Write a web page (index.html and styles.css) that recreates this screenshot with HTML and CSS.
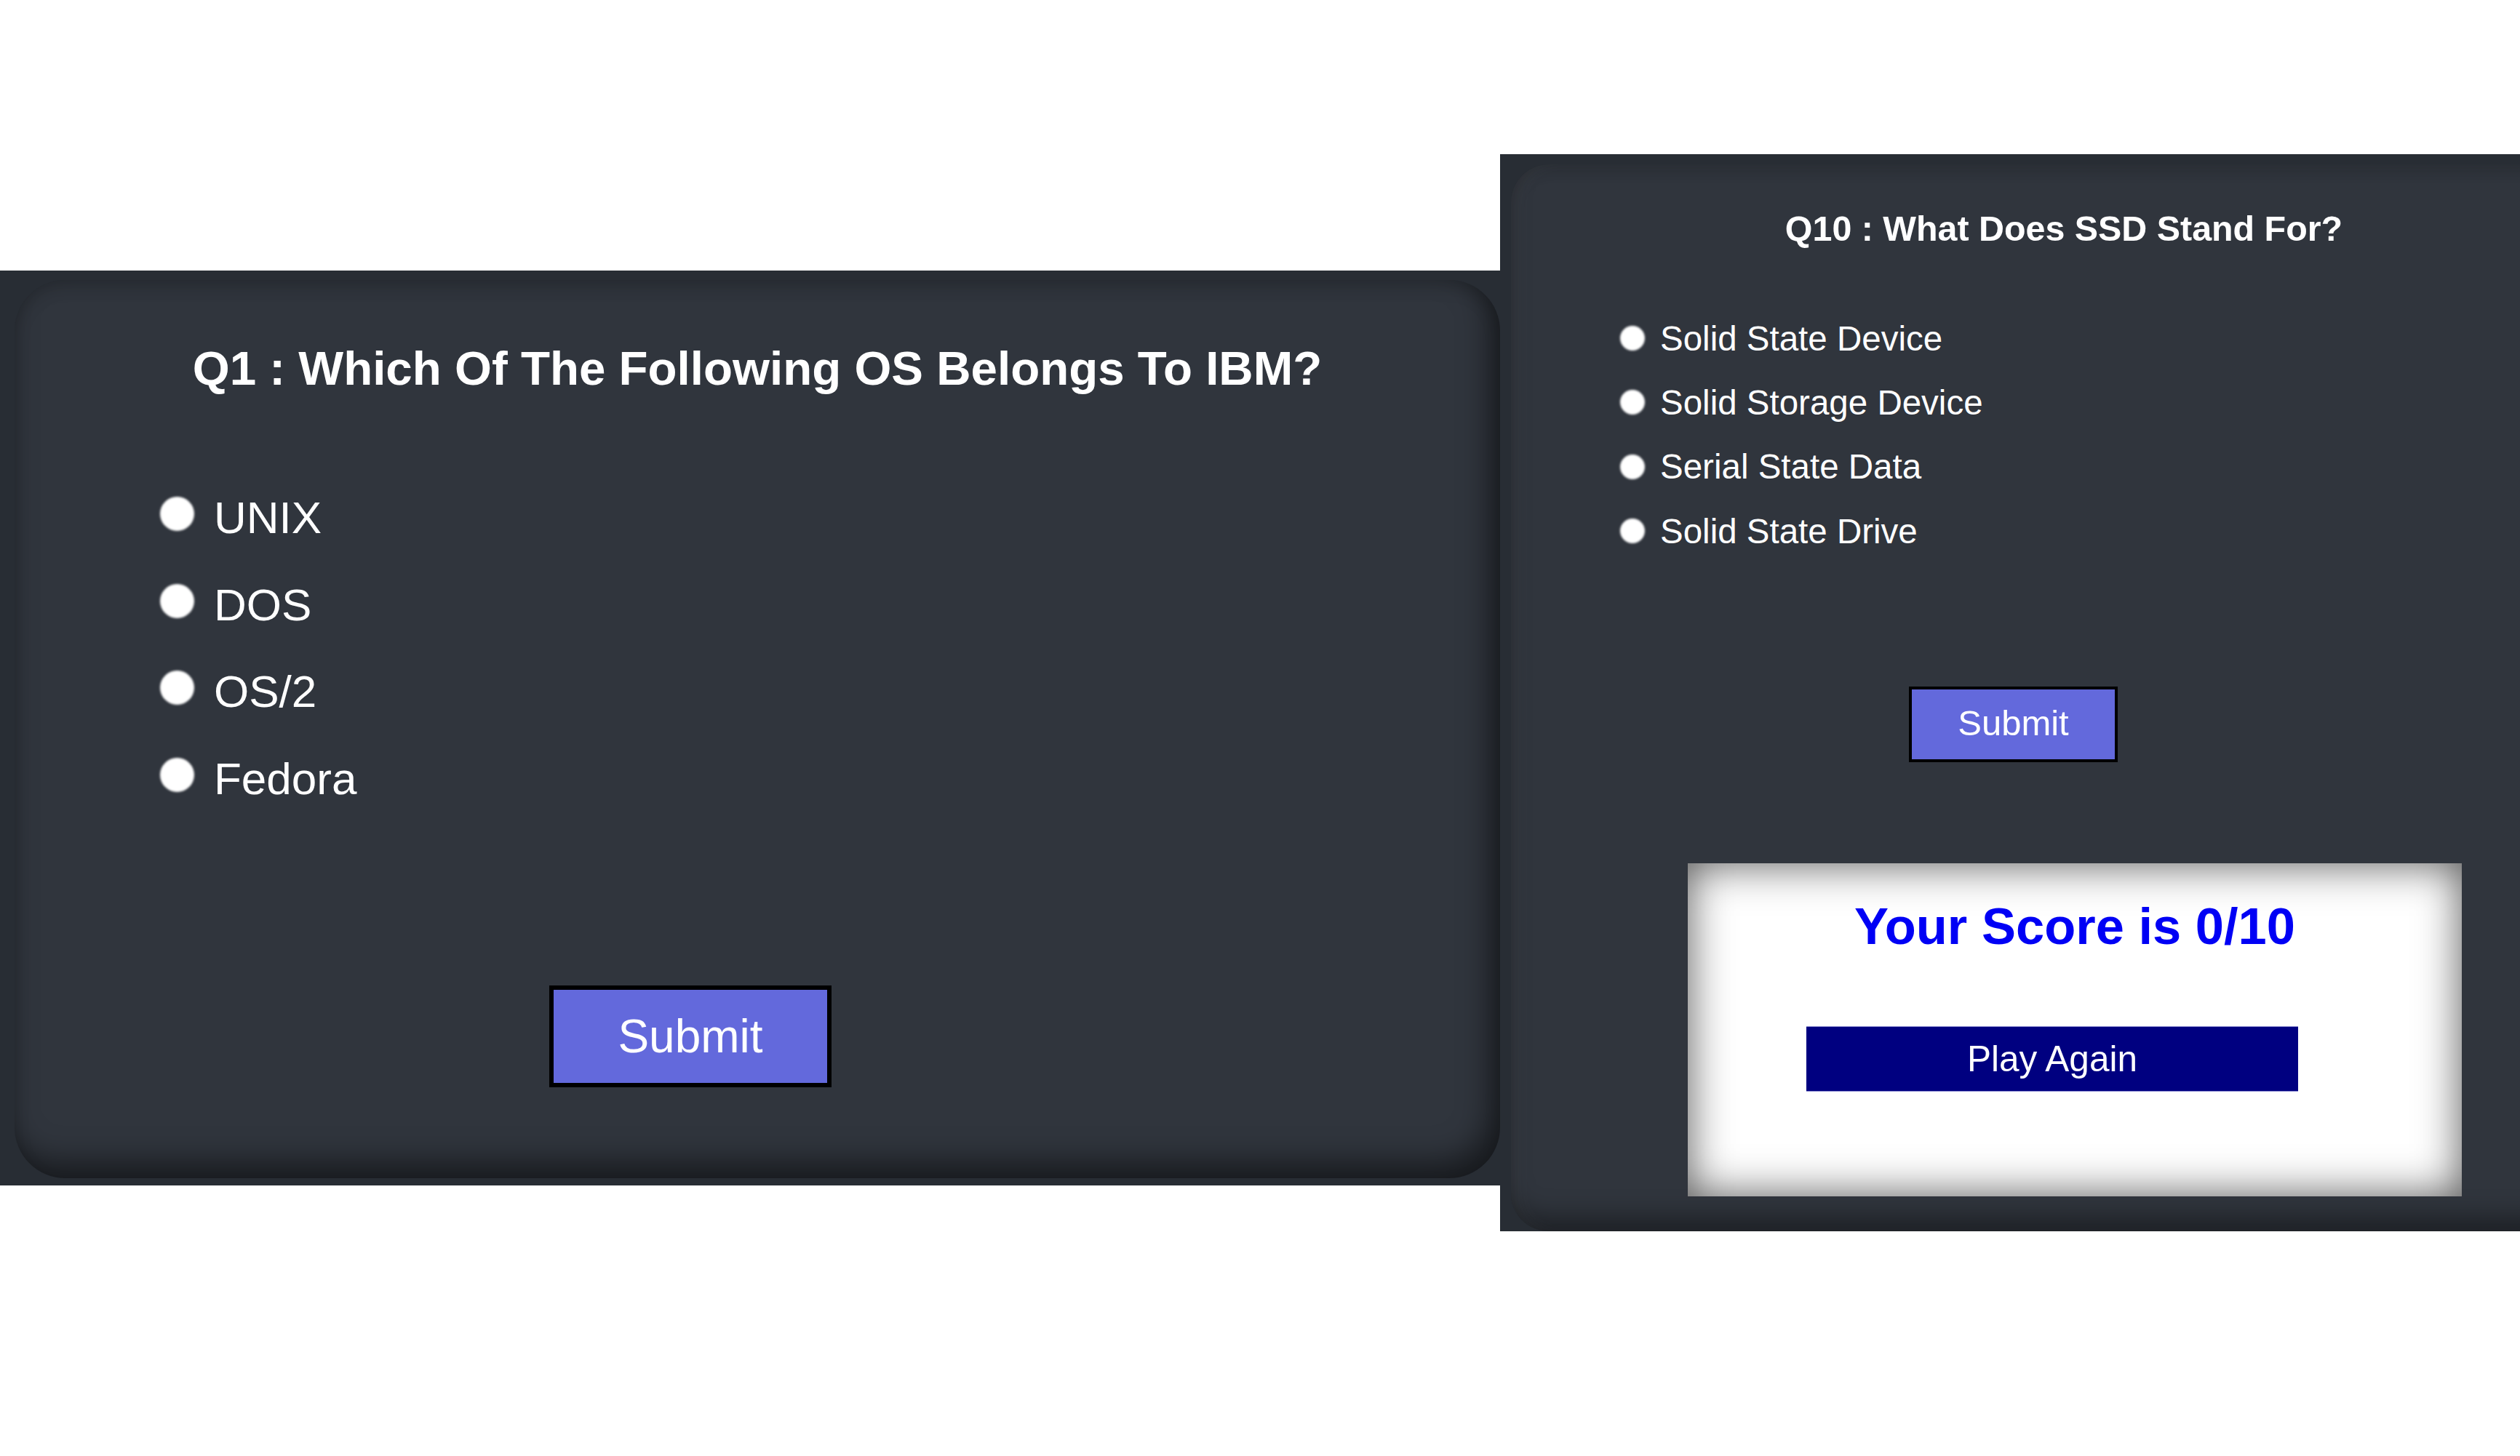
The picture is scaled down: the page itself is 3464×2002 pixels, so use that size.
FILE: index.html
```html
<!DOCTYPE html>
<html lang="en">
<head>
<meta charset="utf-8">
<title>Quiz</title>
<link rel="stylesheet" href="styles.css">
</head>
<body>
<main class="stage">
  <section class="panel panel-lg">
    <div class="card card-lg">
      <h2 class="q-title q-title-lg">Q1 : Which Of The Following OS Belongs To IBM?</h2>
      <ul class="options options-lg">
        <li class="option"><span class="radio"></span><span class="label">UNIX</span></li>
        <li class="option"><span class="radio"></span><span class="label">DOS</span></li>
        <li class="option"><span class="radio"></span><span class="label">OS/2</span></li>
        <li class="option"><span class="radio"></span><span class="label">Fedora</span></li>
      </ul>
      <button class="submit submit-lg">Submit</button>
    </div>
  </section>
  <section class="panel panel-sm">
    <div class="card card-sm">
      <h2 class="q-title q-title-sm">Q10 : What Does SSD Stand For?</h2>
      <ul class="options options-sm">
        <li class="option"><span class="radio"></span><span class="label">Solid State Device</span></li>
        <li class="option"><span class="radio"></span><span class="label">Solid Storage Device</span></li>
        <li class="option"><span class="radio"></span><span class="label">Serial State Data</span></li>
        <li class="option"><span class="radio"></span><span class="label">Solid State Drive</span></li>
      </ul>
      <button class="submit submit-sm">Submit</button>
      <div class="result">
        <p class="score">Your Score is 0/10</p>
        <button class="again">Play Again</button>
      </div>
    </div>
  </section>
</main>
</body>
</html>
```

FILE: styles.css
```css
html, body {
  margin: 0;
  padding: 0;
  background: #ffffff;
}

body {
  width: 3464px;
  height: 2002px;
  overflow: hidden;
  font-family: "Liberation Sans", Arial, sans-serif;
  color: #ffffff;
}

.stage {
  display: flex;
  align-items: flex-start;
}

.panel {
  box-sizing: border-box;
  background: #282d34;
  overflow: hidden;
  flex: none;
}

.panel-lg {
  width: 2062px;
  height: 1258px;
  margin-top: 372px;
  padding: 13px 0 0 20px;
}

.panel-sm {
  width: 1402px;
  height: 1481px;
  margin-top: 212px;
  padding: 14px 0 0 15px;
}

.card {
  box-sizing: border-box;
  background: #30353d;
  display: flex;
  flex-direction: column;
  align-items: flex-start;
}

.card-lg {
  width: 2042px;
  height: 1235px;
  border-radius: 70px;
  padding-top: 84px;
  box-shadow: inset -14px -22px 42px rgba(0, 0, 0, 0.5), inset 0 10px 22px rgba(0, 0, 0, 0.14);
}

.card-sm {
  width: 1520px;
  height: 1467px;
  border-radius: 52px;
  padding-top: 60px;
  box-shadow: inset 14px 0 22px rgba(255, 255, 255, 0.03), inset -10px -18px 36px rgba(0, 0, 0, 0.42), inset 0 8px 20px rgba(0, 0, 0, 0.12);
}

.q-title {
  margin: 0;
  align-self: stretch;
  text-align: center;
  font-weight: bold;
  color: #ffffff;
  line-height: normal;
}

.q-title-lg {
  font-size: 65.5px;
}

.q-title-sm {
  font-size: 48.4px;
}

.options {
  list-style: none;
  margin: 0;
  padding: 0;
  display: flex;
  flex-direction: column;
}

.options-lg {
  margin-top: 108px;
  padding-left: 200px;
  font-size: 62px;
  line-height: 119.5px;
}

.options-sm {
  margin-top: 80px;
  padding-left: 150px;
  font-size: 47.5px;
  line-height: 88.2px;
}

.option {
  display: flex;
  align-items: center;
}

.radio {
  flex: none;
  border-radius: 50%;
  background: #ffffff;
  filter: blur(1.4px);
}

.options-lg .radio {
  width: 47px;
  height: 47px;
  margin-right: 27px;
  margin-bottom: 10px;
}

.options-sm .radio {
  width: 34px;
  height: 34px;
  margin-right: 21px;
  margin-bottom: 2px;
}

.submit {
  box-sizing: border-box;
  padding: 0;
  background: #6369dc;
  color: #ffffff;
  border-style: solid;
  border-color: #000000;
  font-family: "Liberation Sans", Arial, sans-serif;
  text-align: center;
}

.submit-lg {
  margin-top: 225px;
  margin-left: 735px;
  width: 388px;
  height: 140px;
  border-width: 6px;
  padding-bottom: 0;
  font-size: 64px;
}

.submit-sm {
  margin-top: 169px;
  margin-left: 547px;
  width: 287px;
  height: 104px;
  border-width: 4px;
  padding-bottom: 3px;
  font-size: 49px;
}

.result {
  box-sizing: border-box;
  margin-top: 139px;
  margin-left: 243px;
  width: 1064px;
  height: 458px;
  padding-top: 46px;
  background: #ffffff;
  box-shadow: inset 0 0 60px rgba(0, 0, 0, 0.68);
  display: flex;
  flex-direction: column;
  align-items: flex-start;
}

.score {
  margin: 0;
  align-self: stretch;
  text-align: center;
  font-size: 70.5px;
  font-weight: bold;
  line-height: normal;
  color: #0000f5;
}

.again {
  box-sizing: border-box;
  margin-top: 97px;
  margin-left: 163px;
  width: 676px;
  height: 90px;
  padding: 0;
  border: none;
  border-top: 1px solid #8a8ad0;
  border-bottom: 1px solid #8a8ad0;
  background: #000080;
  color: #ffffff;
  font-family: "Liberation Sans", Arial, sans-serif;
  font-size: 49.5px;
  text-align: center;
}
```
